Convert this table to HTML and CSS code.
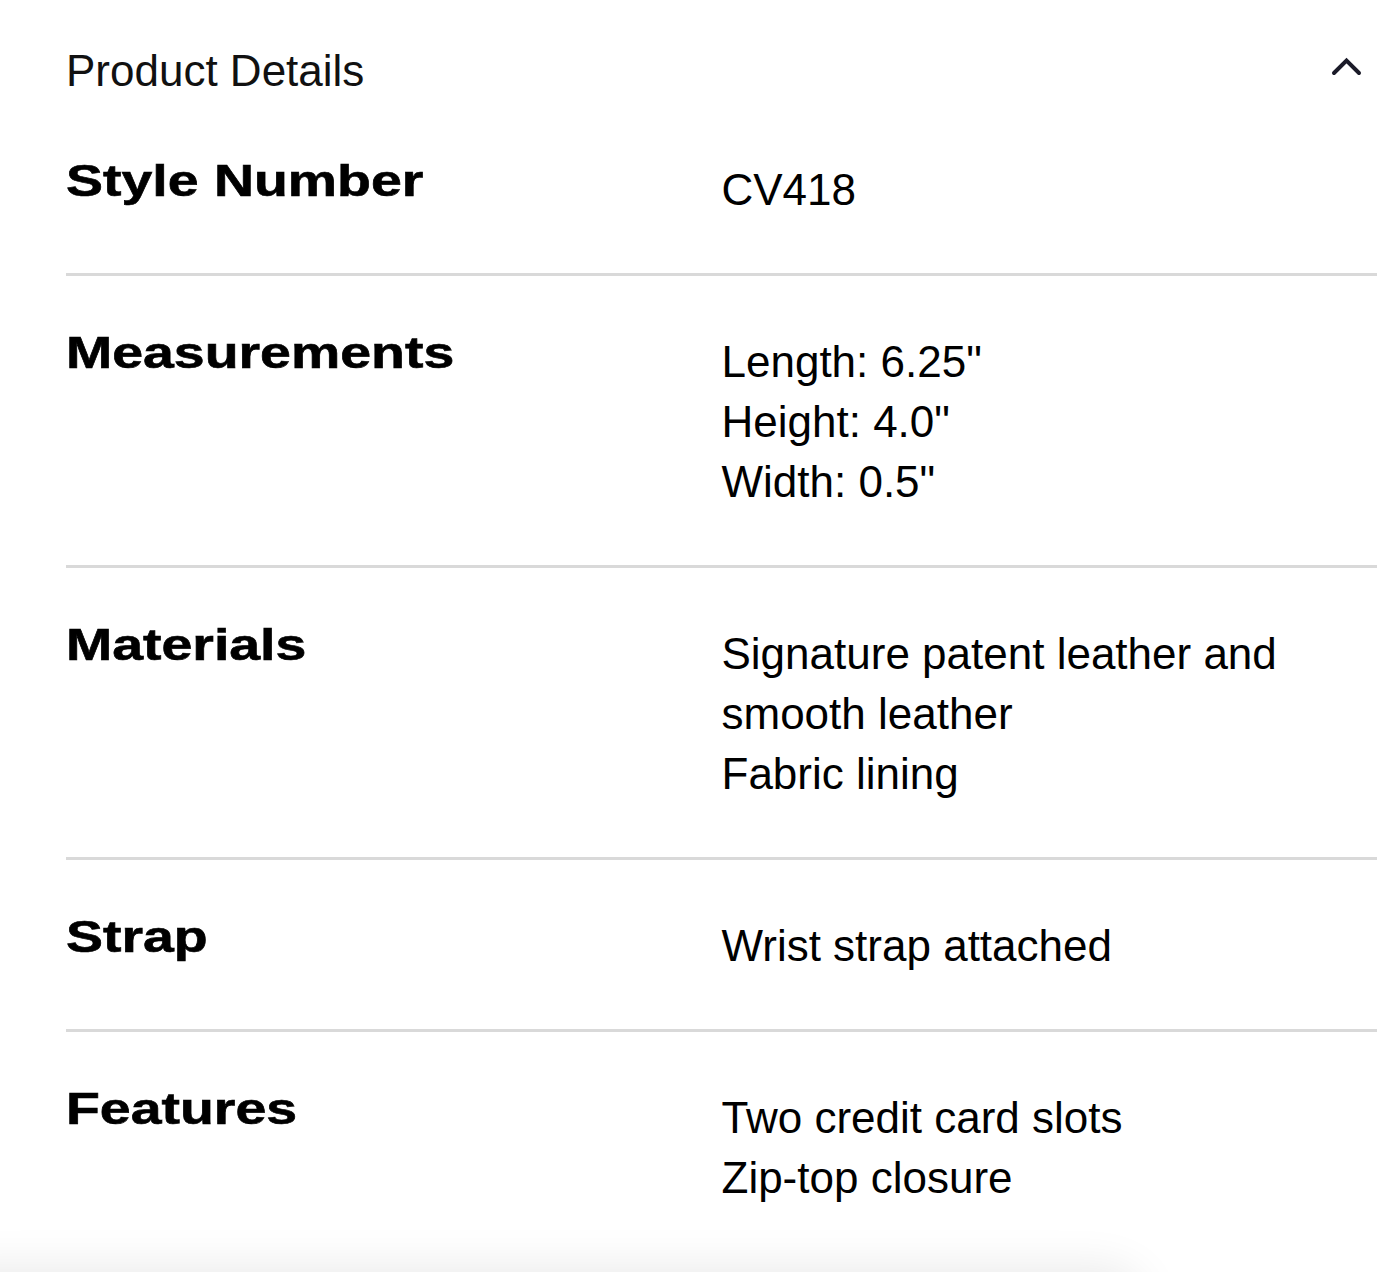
FILE: index.html
```html
<!DOCTYPE html>
<html lang="en">
<head>
<meta charset="utf-8">
<title>Product Details</title>
<link rel="stylesheet" href="styles.css">
</head>
<body>
<section class="details">
  <header class="details-head">
    <h2 class="details-title">Product Details</h2>
    <svg class="chevron" width="33" height="21" viewBox="0 0 33 21" aria-hidden="true">
      <polyline points="4,17 16.5,4.5 29,17" fill="none" stroke="#1b1b29" stroke-width="4" stroke-linecap="round" stroke-linejoin="miter"/>
    </svg>
  </header>
  <dl class="spec-list">
    <div class="spec-row">
      <dt class="spec-label"><span>Style Number</span></dt>
      <dd class="spec-value"><p>CV418</p></dd>
    </div>
    <div class="spec-row">
      <dt class="spec-label"><span>Measurements</span></dt>
      <dd class="spec-value"><p>Length: 6.25"</p><p>Height: 4.0"</p><p>Width: 0.5"</p></dd>
    </div>
    <div class="spec-row">
      <dt class="spec-label"><span>Materials</span></dt>
      <dd class="spec-value"><p>Signature patent leather and smooth leather</p><p>Fabric lining</p></dd>
    </div>
    <div class="spec-row">
      <dt class="spec-label"><span>Strap</span></dt>
      <dd class="spec-value"><p>Wrist strap attached</p></dd>
    </div>
    <div class="spec-row">
      <dt class="spec-label"><span>Features</span></dt>
      <dd class="spec-value"><p>Two credit card slots</p><p>Zip-top closure</p></dd>
    </div>
  </dl>
</section>
<div class="bottom-bar"></div>
</body>
</html>
```
FILE: styles.css
```css
html, body {
  margin: 0;
  padding: 0;
  background: #ffffff;
}

body {
  font-family: "Liberation Sans", Arial, Helvetica, sans-serif;
  color: #000000;
  overflow: hidden;
}

.details {
  margin-left: 66px;
  width: 1311px;
}

.details-head {
  display: flex;
  justify-content: space-between;
  align-items: flex-start;
  padding: 46px 14px 8px 0;
}

.details-title {
  margin: 0;
  font-size: 44px;
  line-height: 50px;
  font-weight: 400;
  color: #111111;
}

.chevron {
  display: block;
  margin-top: 10px;
}

.spec-list {
  margin: 0;
  padding: 0;
}

.spec-row {
  display: grid;
  grid-template-columns: 1fr 1fr;
  padding: 52px 0 53px;
  border-bottom: 3px solid #d9d9d9;
}

.spec-row:last-child {
  border-bottom: none;
}

.spec-label {
  margin: 0;
  font-size: 44px;
  line-height: 50px;
  font-weight: 700;
}

.spec-label span {
  display: inline-block;
  transform: scaleX(1.26);
  transform-origin: left center;
  -webkit-text-stroke: 0.6px #000000;
}

.spec-value {
  margin: 4px 0 0;
  font-size: 44px;
  line-height: 60px;
}

.spec-value p {
  margin: 0;
}

.bottom-bar {
  position: fixed;
  left: -60px;
  bottom: -70px;
  width: 1200px;
  height: 70px;
  border-radius: 60px;
  background: #ffffff;
  box-shadow: 0 0 46px 4px rgba(0, 0, 0, 0.09);
}
```
